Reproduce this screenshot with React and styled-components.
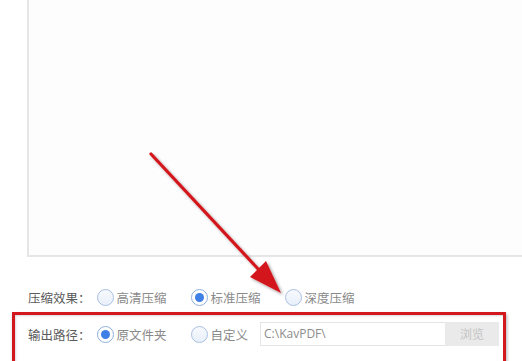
import React from 'react'
import styled, { createGlobalStyle } from 'styled-components'

const GlobalStyle = createGlobalStyle`
    html, body {
        margin: 0;
        padding: 0;
        background: #ffffff;
    }
    body {
        font-family: "Noto Sans CJK SC", "Noto Sans", sans-serif;
    }
`

// Radio dot used by every option
function Radio({ checked }) {
    return (
        <RadioCircle $checked={checked}>
            {checked && <RadioDot />}
        </RadioCircle>
    )
}

function Option({ checked, label, gap }) {
    return (
        <OptionStyled $gap={gap}>
            <Radio checked={checked} />
            <OptionText>{label}</OptionText>
        </OptionStyled>
    )
}

// Red annotation arrow drawn over the page
function Arrow() {
    return (
        <ArrowLayer width="522" height="361" viewBox="0 0 522 361">
            <defs>
                <filter id="arrowShadow" x="-20%" y="-20%" width="140%" height="140%">
                    <feDropShadow dx="2" dy="2" stdDeviation="1.5" floodColor="#000" floodOpacity="0.35" />
                </filter>
            </defs>
            <g filter="url(#arrowShadow)">
                <line x1="151" y1="154" x2="260" y2="271" stroke="#d3181d" strokeWidth="3.2" strokeLinecap="round" />
                <polygon points="281,293 250,277 266,261" fill="#d3181d" />
            </g>
        </ArrowLayer>
    )
}

function App() {
    return (
        <Page>
            <GlobalStyle />
            <Preview />
            <Settings>
                <Row>
                    <Label>压缩效果：</Label>
                    <Option label="高清压缩" gap={24} />
                    <Option label="标准压缩" checked gap={24} />
                    <Option label="深度压缩" />
                </Row>
                <Highlight>
                    <Row>
                        <Label>输出路径：</Label>
                        <Option label="原文件夹" checked gap={24} />
                        <Option label="自定义" gap={12} />
                        <PathBox>
                            <PathInput>C:\KavPDF\</PathInput>
                            <BrowseButton>浏览</BrowseButton>
                        </PathBox>
                    </Row>
                </Highlight>
            </Settings>
            <Arrow />
        </Page>
    )
}

const Page = styled.div`
    position: relative;
    width: 522px;
    height: 361px;
    overflow: hidden;
    background: #ffffff;
`

const Preview = styled.div`
    margin-left: 27px;
    height: 255px;
    background: #fdfdfd;
    border-left: 2px solid #e6e6e6;
    border-bottom: 2px solid #e6e6e6;
`

const Settings = styled.div`
    display: flex;
    flex-direction: column;
    padding-top: 28px;
`

const Row = styled.div`
    display: flex;
    align-items: center;
    height: 24px;
    padding-left: 28px;
`

const Highlight = styled.div`
    margin: 3px 0 0 12px;
    width: 488px;
    height: 60px;
    border: 3px solid #d3181d;
    padding-top: 7px;
    box-shadow: 1px 2px 3px rgba(0, 0, 0, 0.3), inset 1px 1px 2px rgba(0, 0, 0, 0.15);

    ${Row} {
        padding-left: 13px;
    }
`

const Label = styled.span`
    font-size: 12.5px;
    color: #5a5a5a;
    white-space: nowrap;
    margin-right: 6px;
`

const OptionStyled = styled.div`
    display: flex;
    align-items: center;
    margin-right: ${p => p.$gap || 0}px;
`

const OptionText = styled.span`
    font-size: 12.5px;
    color: #8a8a8a;
    white-space: nowrap;
    margin-left: 3px;
`

const RadioCircle = styled.span`
    box-sizing: border-box;
    display: flex;
    align-items: center;
    justify-content: center;
    width: 17px;
    height: 17px;
    border-radius: 50%;
    border: 1px solid ${p => (p.$checked ? '#8fb0de' : '#a9c0e2')};
    background: ${p => (p.$checked ? '#ffffff' : 'linear-gradient(#f7f9fd, #e9f0fa)')};
`

const RadioDot = styled.span`
    width: 9px;
    height: 9px;
    border-radius: 50%;
    background: #3f80e6;
`

const PathBox = styled.div`
    display: flex;
    height: 24px;
`

const PathInput = styled.div`
    box-sizing: border-box;
    width: 185px;
    height: 24px;
    padding-left: 3px;
    border: 1px solid #e4e4e4;
    border-right: none;
    background: #ffffff;
    font-family: "Open Sans", "Noto Sans", sans-serif;
    font-size: 12px;
    line-height: 22px;
    color: #8c8c8c;
`

const BrowseButton = styled.div`
    width: 54px;
    height: 24px;
    background: #eaeaea;
    color: #c4c4c4;
    font-size: 12px;
    line-height: 24px;
    text-align: center;
`

const ArrowLayer = styled.svg`
    position: absolute;
    left: 0;
    top: 0;
    pointer-events: none;
`

export default App
